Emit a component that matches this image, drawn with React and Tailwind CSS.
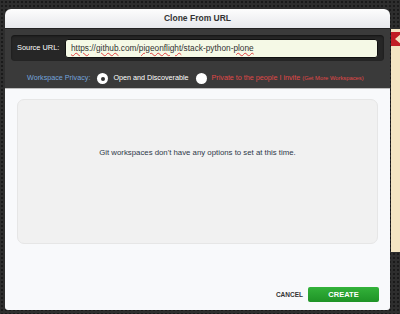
export default function App() {
  return (
    <div
      className="w-[400px] h-[314px] overflow-hidden flex items-start pt-[9px] pl-[5px] bg-[#2e2e2e] bg-[radial-gradient(#1a1a1a_0.8px,transparent_1px)] bg-[length:4px_4px] whitespace-nowrap"
      style={{ fontFamily: '"Liberation Sans", Arial, sans-serif' }}
    >
      <div className="w-[385px] h-[301px] flex flex-col rounded-t-[6px] rounded-b-[3px] overflow-hidden shrink-0">
        <div className="h-[20px] shrink-0 flex items-center justify-center bg-gradient-to-b from-[#fdfdfd] to-[#e7e8ec] border-b border-[#222] text-[8.5px] font-bold text-[#333]">
          Clone From URL
        </div>
        <div className="h-[60px] shrink-0 bg-[#3a3a3a] px-[6px] pt-[6px] flex flex-col border-b border-[#bdbdbd]">
          <div className="h-[26px] rounded-[4px] bg-[#262626] flex items-center pl-[6px] pr-[6px] shadow-[inset_0_1px_2px_rgba(0,0,0,0.5)]">
            <span className="text-[7.4px] text-white">Source URL:</span>
            <div className="ml-auto w-[313px] h-[19px] rounded-[3px] bg-[#f5f9e6] border border-[#111] flex items-center pl-[5px] text-[8.3px] text-[#333]">
              <span>
                <span className="underline decoration-wavy decoration-[#e04040] decoration-[1px]">https</span>://
                <span className="underline decoration-wavy decoration-[#e04040] decoration-[1px]">github</span>.com/
                <span className="underline decoration-wavy decoration-[#e04040] decoration-[1px]">pigeonflight</span>/stack-python-
                <span className="underline decoration-wavy decoration-[#e04040] decoration-[1px]">plone</span>
              </span>
            </div>
          </div>
          <div className="flex items-center mt-[10px] pl-[16px] h-[15px]">
            <span className="text-[7.2px] text-[#74a4dc]">Workspace Privacy:</span>
            <span className="ml-[7px] w-[11px] h-[11px] rounded-full bg-white flex items-center justify-center shrink-0">
              <span className="w-[4px] h-[4px] rounded-full bg-[#333]" />
            </span>
            <span className="ml-[5px] text-[7.2px] text-white">Open and Discoverable</span>
            <span className="ml-[7px] w-[11px] h-[11px] rounded-full bg-white shrink-0" />
            <span className="ml-[5px] text-[7.2px] text-[#e04848]">Private to the people I invite</span>
            <span className="ml-[2px] text-[5.8px] text-[#e04848]">(Get More Workspaces)</span>
          </div>
        </div>
        <div className="flex-1 bg-[#f8f9fb] px-[12px] pt-[10px] flex flex-col">
          <div className="h-[145px] rounded-[7px] bg-[#f1f1f1] border border-[#e6e6e6] pt-[47px] text-center text-[7.8px] text-[#2d3848]">
            Git workspaces don't have any options to set at this time.
          </div>
          <div className="mt-[43px] flex items-center justify-end mr-[-1px]">
            <span className="text-[6.5px] font-bold text-[#333]">CANCEL</span>
            <div className="ml-[5px] w-[71px] h-[15px] rounded-[2px] bg-gradient-to-b from-[#33b23a] to-[#1e9326] flex items-center justify-center text-[7.5px] font-bold text-white">
              CREATE
            </div>
          </div>
        </div>
      </div>
      <div className="mt-[20px] ml-[1px] w-[10px] h-[223px] bg-[#f3e5c2] shrink-0 flex flex-col">
        <svg width="10" height="16" viewBox="0 0 10 16" className="mt-[3px]">
          <polygon points="0,0 10,0 10,2 4,7 10,12 10,14 0,14 0,0" fill="#c11f24" />
        </svg>
      </div>
    </div>
  );
}
